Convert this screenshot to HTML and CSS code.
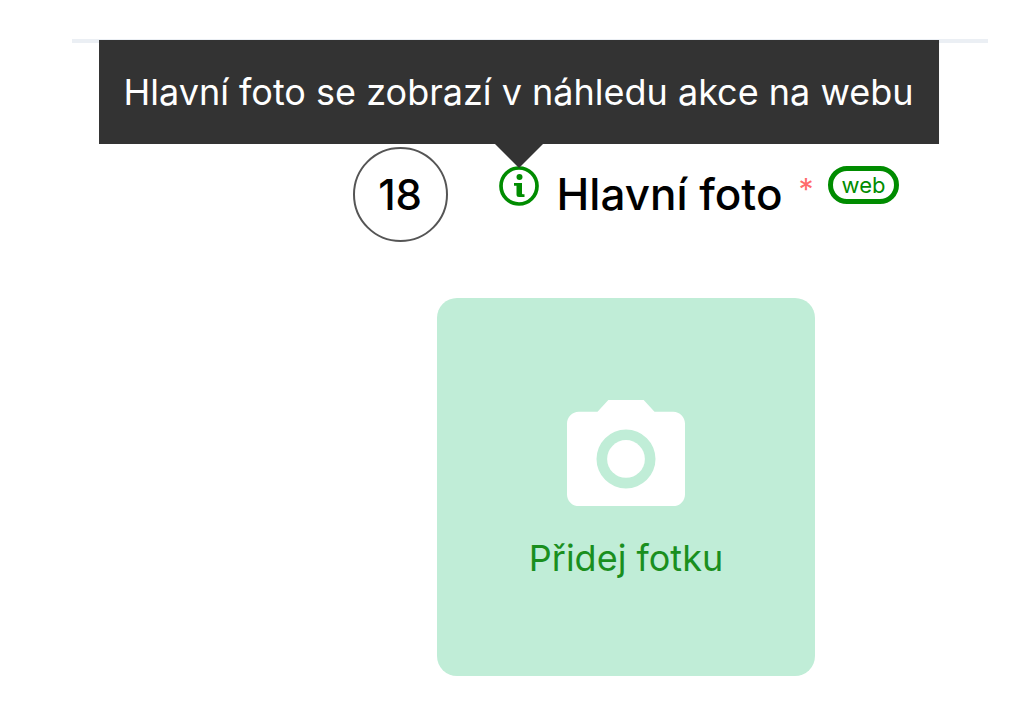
FILE: index.html
```
<!DOCTYPE html>
<html lang="cs">

<head>
    <meta charset="UTF-8">
    <meta name="viewport" content="width=device-width, initial-scale=1.0">
    <title>Hlavní foto</title>
    <link rel="stylesheet" href="styles.css">
</head>

<body>
    <main>
        <section class="form-step">
            <header class="step-header">
                <span class="step-number">18</span>
                <div class="info">
                    <button type="button" class="info-button" aria-label="Nápověda" aria-describedby="photoTooltip">
                        <svg viewBox="0 0 40 40" aria-hidden="true">
                            <circle cx="20" cy="20" r="18" fill="none" stroke="currentColor" stroke-width="3.700"/>
                            <circle cx="20.500" cy="11" r="3" fill="currentColor"/>
                            <path d="M15 17h8v10.500q0 .8.8.8H25.500V31H20q-2.500 0-2.500-2.500V19.700H15z" fill="currentColor"/>
                        </svg>
                    </button>
                    <div class="tooltip" id="photoTooltip" role="tooltip">Hlavní foto se zobrazí v náhledu akce na webu</div>
                </div>
                <h2>Hlavní foto</h2>
                <span class="required">*</span>
                <span class="badge">web</span>
            </header>

            <button type="button" class="photo-upload">
                <svg viewBox="2 2 20 18" aria-hidden="true">
                    <path fill="currentColor" fill-rule="evenodd" d="M9 2 7.170 4H4c-1.100 0-2 .9-2 2v12c0 1.100.9 2 2 2h16c1.100 0 2-.9 2-2V6c0-1.100-.9-2-2-2h-3.170L15 2zM12 17a5 5 0 1 1 0-10 5 5 0 0 1 0 10z"/>
                    <circle cx="12" cy="12" r="3.200" fill="currentColor"/>
                </svg>
                <span>Přidej fotku</span>
            </button>
        </section>
    </main>
</body>

</html>
```
FILE: styles.css
```
:root {
    --green: #008c00;
    --upload-text: #1a8f1e;
    --light-green: #c0edd7;
    --tooltip-bg: #333;
    --line-color: #ebeff4;
    --required-color: #ff6b6b;
}

* {
    margin: 0;
    padding: 0;
    box-sizing: border-box;
}

body {
    font-family: Inter, 'Liberation Sans', sans-serif;
    background-color: #fff;
    color: #000;
}

button {
    font: inherit;
    border: none;
    background: none;
    cursor: pointer;
}

main {
    padding: 39px 36px 48px 72px;
}

.form-step {
    display: flex;
    flex-direction: column;
    align-items: center;
    gap: 56px;
    padding: 104px 0 0 192px;
    border-top: 4px solid var(--line-color);
}

.step-header {
    display: flex;
    align-items: flex-start;
}

.step-number {
    display: flex;
    align-items: center;
    justify-content: center;
    width: 95px;
    height: 95px;
    border: 2px solid #555;
    border-radius: 50%;
    font-size: 42px;
    font-weight: 500;
}

.info {
    position: relative;
    margin: 19px 18px 0 51px;
}

.info-button {
    display: block;
    width: 40px;
    height: 40px;
    color: var(--green);
}

.info-button svg {
    display: block;
}

.tooltip {
    position: absolute;
    bottom: calc(100% + 22px);
    left: 50%;
    transform: translateX(-50%);
    padding: 28px 25px;
    background-color: var(--tooltip-bg);
    color: #fff;
    font-size: 36px;
    line-height: 48px;
    white-space: nowrap;
}

/* Arrow */
.tooltip::after {
    content: '';
    position: absolute;
    top: 100%;
    left: 50%;
    margin-left: -24px;
    border: 24px solid transparent;
    border-top-color: var(--tooltip-bg);
    border-bottom: none;
}

h2 {
    font-size: 44px;
    font-weight: 500;
    line-height: 95px;
}

.required {
    margin: 24px 14px 0 16px;
    color: var(--required-color);
    font-size: 30px;
    line-height: 36px;
}

.badge {
    margin-top: 19px;
    padding: 0 9px;
    border: 5px solid var(--green);
    border-radius: 20px;
    color: var(--green);
    font-size: 22px;
    line-height: 28px;
}

.photo-upload {
    display: flex;
    flex-direction: column;
    align-items: center;
    justify-content: center;
    gap: 28px;
    width: 378px;
    aspect-ratio: 1;
    padding-top: 8px;
    border-radius: 20px;
    background-color: var(--light-green);
    color: var(--upload-text);
    font-size: 36px;
    line-height: 48px;
}

.photo-upload svg {
    width: 118px;
    color: #fff;
}
```
